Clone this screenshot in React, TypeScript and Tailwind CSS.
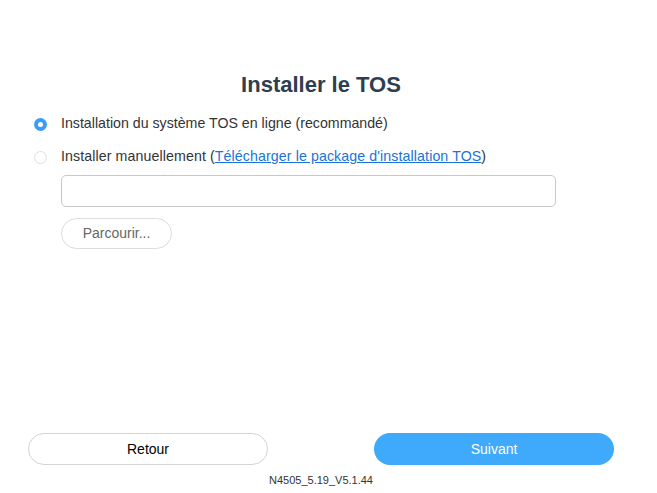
const App = () => {
  return (
    <div className="w-[642px] h-[493px] bg-white flex flex-col text-[#333] font-['Liberation_Sans',Arial,sans-serif]">
      <h1 className="pt-[72px] text-center text-[22px] leading-[26px] font-bold text-[#2c3e50]">Installer le TOS</h1>

      <div className="pl-[34px] mt-[16px] flex flex-col gap-[13px]">
        <label className="flex items-center h-[20px] text-[14.2px]">
          <span className="w-[13px] h-[13px] rounded-full bg-[#3d9cf7] flex items-center justify-center">
            <span className="w-[5px] h-[5px] rounded-full bg-white" />
          </span>
          <span className="ml-[14px]">Installation du système TOS en ligne (recommandé)</span>
        </label>
        <label className="flex items-center h-[20px] text-[14.2px]">
          <span className="w-[13px] h-[13px] rounded-full border border-[#dcdfe6] bg-white" />
          <span className="ml-[14px] tracking-[0.1px]">
            Installer manuellement (
            <a className="text-[#1a73d9] underline">Télécharger le package d'installation TOS</a>)
          </span>
        </label>
      </div>

      <div className="pl-[61px] mt-[8px] flex flex-col items-start gap-[11px]">
        <div className="w-[495px] h-[32px] rounded-[5px] border border-[#c8c8c8]" />
        <button className="w-[111px] h-[31px] rounded-full border border-[#dcdcdc] text-[14px] text-[#666]">
          Parcourir...
        </button>
      </div>

      <div className="mt-auto px-[28px] flex justify-between">
        <button className="w-[240px] h-[32px] rounded-full border border-[#d4d4d4] text-[14px] text-black">Retour</button>
        <button className="w-[240px] h-[32px] rounded-full bg-[#3fa9fb] text-[14px] text-white">Suivant</button>
      </div>
      <div className="mt-[8px] mb-[6px] text-center text-[11px] leading-[14px] text-[#333]">N4505_5.19_V5.1.44</div>
    </div>
  )
}

export default App
